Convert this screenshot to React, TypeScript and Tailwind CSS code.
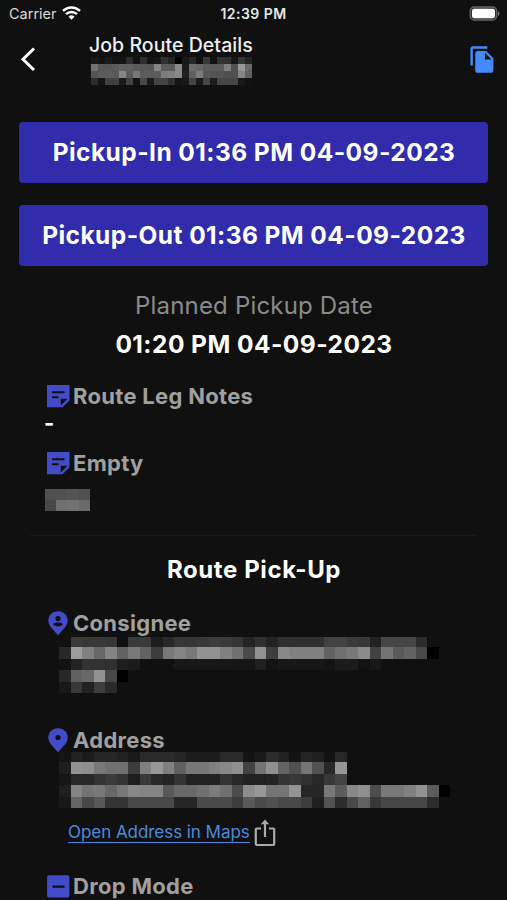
import type { ReactNode } from 'react';
import { MdFileCopy } from 'react-icons/md';

// Hidden values, one hex grey level per block. ".." leaves a block empty.
const JOB_NUMBER = [
  '1a 14 1a 12 14 2c 12 2e 14 18 30 22 04 18 26 10 38 12 34 30 16 36 24',
  '72 58 58 5c 60 60 5a 58 56 84 5c 5c 8a 1c 6c 66 5c 5c 5c 80 50 98 68',
  '54 5c 5c 58 86 5c 78 5c 5c 5c 7c 80 88 20 60 7c 58 54 54 50 50 84 60',
  '2c 14 42 42 1a 42 12 48 1a 44 44 30 14 18 44 1a 46 1c 46 46 46 18 12',
];

const CONSIGNEE = [
  '.. 3a 38 38 36 10 3a 3a 1e 28 35 35 38 3c 3a 35 24 30 24 30 30 30 30 42 42 3a 38 22 46 46 46 2c',
  '28 9c 80 68 84 62 78 62 3c 78 84 78 92 92 80 70 4a 90 3e 88 80 80 80 62 70 78 8a 42 74 5a 62 48 00',
  '12 22 32 32 30 1e 1c .. .. .. 17 18 18 18 18 16 16 20 13 17 17 17 17 13 1c 1c 12 18',
  '28 60 68 92 48 00',
  '18 38 22 3e 2a',
];

const ADDRESS = [
  '14 22 1c 26 26 22 1a 2a 2a 2a 26 1c 1c 1c 2a 2a 14 1a 2c 22 14 24 20 12 28',
  '1e 92 8e 78 70 70 3c 80 98 80 60 78 78 80 88 90 42 74 90 64 50 74 52 28 96',
  '16 28 28 34 3a 34 1e 3a 28 24 34 22 22 22 34 28 22 22 24 34 38 30 28 38 44',
  '1e 84 74 78 68 78 88 84 84 58 68 68 70 7c 70 4c 8c 98 74 74 94 26 26 78 5c 88 90 4c 78 78 80 92 5c 02',
  '18 64 48 58 34 34 48 48 48 48 26 26 4a 4a 4a 3c 5a 4a 50 48 48 3c 20 52 2c 48 62 38 46 46 46 46 2c',
];

function Mosaic({ rows, size, first, className }: { rows: string[]; size: number; first?: number; className: string }) {
  const trim = size - (first ?? size);
  return (
    <svg className={`block ${className}`} shapeRendering="crispEdges" aria-hidden="true">
      {rows.map((row, y) =>
        row.split(' ').map((g, x) =>
          g === '..' ? null : (
            <rect
              key={`${x}-${y}`}
              x={x * size}
              y={y === 0 ? 0 : y * size - trim}
              width={size}
              height={y === 0 ? size - trim : size}
              fill={`#${g}${g}${g}`}
            />
          ),
        ),
      )}
    </svg>
  );
}

function NoteIcon() {
  return (
    <svg width="23" height="23" viewBox="0 0 23 23" fill="#434bc9">
      <path fillRule="evenodd" d="M0 0H22.500V15.500L15.500 22.300H0zM5 6.200v2h12.500v-2zM5 11.200v2h6.500v-2zM13.700 20.500 20.500 13.700H13.700z" />
    </svg>
  );
}

function PinIcon({ person }: { person?: boolean }) {
  return (
    <svg className="ml-px" width="20" height="25" viewBox="0 0 20 25" fill="#434bc9">
      <path d="M10 .2C4.500.2.300 4.300.300 9.600c0 2.600 1.200 4.900 3 7.200L10 24.200l6.700-7.400c1.800-2.300 3-4.600 3-7.200C19.700 4.300 15.500.2 10 .2z" />
      {person ? (
        <g fill="#101010">
          <circle cx="10" cy="7.500" r="2.600" />
          <path d="M5 13.100c1.200-2.100 8.800-2.100 10 0-1.600 3.200-8.400 3.200-10 0z" />
        </g>
      ) : (
        <circle cx="10" cy="9.500" r="2.600" fill="#101010" />
      )}
    </svg>
  );
}

function DropIcon() {
  return (
    <svg width="23" height="23" viewBox="0 0 23 23" fill="#434bc9">
      <rect x=".1" y=".3" width="22.300" height="22.300" rx="1.800" />
      <path d="M5.500 10.500h12v2.300h-12z" fill="#101010" />
    </svg>
  );
}

function Label({ icon, children }: { icon: ReactNode; children: ReactNode }) {
  return (
    <div className="flex h-7 items-center pl-[47px]">
      <span className="flex w-[26px] shrink-0">{icon}</span>
      <span className="text-[22px] leading-7 font-[650] tracking-[0.3px] whitespace-nowrap text-[#a0a0a0]">{children}</span>
    </div>
  );
}

export default function App() {
  return (
    <main className="flex h-[900px] w-[507px] flex-col overflow-hidden bg-[#101010] font-['Inter',sans-serif] text-white">
      {/* Status bar */}
      <div className="grid h-7 shrink-0 grid-cols-3 items-center pr-[7px] pb-px pl-[9px] text-[14.5px]">
        <div className="flex items-center gap-1.5 text-[#d8d8d8]">
          <span>Carrier</span>
          <svg className="-ml-px -mt-px" width="19" height="14" viewBox="0 0 19 14" fill="none" stroke="#fff" strokeWidth="2.5">
            <path d="M1 4.900a12.200 12.200 0 0 1 17 0" />
            <path d="M4 8.200a8 8 0 0 1 11 0" />
            <path d="M9.500 13.800 6.500 10.800a4.300 4.300 0 0 1 6 0z" fill="#fff" stroke="none" />
          </svg>
        </div>
        <span className="-ml-0.5 text-center text-[14px] font-semibold tracking-[0.45px] whitespace-nowrap text-[#e8e8e8]">12:39 PM</span>
        <svg className="-mt-px justify-self-end" width="31" height="15" viewBox="0 0 31 15">
          <rect x="1.200" y="1" width="26.500" height="13" rx="4" fill="#303030" stroke="#666" strokeWidth="1.300" />
          <rect x="3" y="2.700" width="23" height="9.600" rx="2.300" fill="#fff" />
          <path d="M29 5.200c2 .7 2 4 0 4.600z" fill="#777" />
        </svg>
      </div>

      {/* App bar */}
      <header className="flex h-[68px] shrink-0 items-start border-b border-[#0d0d0d] pr-2.5">
        <svg className="mt-[19px] ml-[20px]" width="16" height="25" viewBox="0 0 16 25" fill="none" stroke="#fff" strokeWidth="3">
          <path d="M14 1.500 3 12.300 14 23" />
        </svg>
        <div className="ml-[53px] flex-1 pt-[5px]">
          <h1 className="text-[19.5px] leading-6 font-medium tracking-[0.05px] text-[#efefef]">Job Route Details</h1>
          <Mosaic rows={JOB_NUMBER} size={7} className="ml-[2px] h-7 w-[161px]" />
        </div>
        <MdFileCopy className="mt-[17px] size-[29px] text-[#448aff]" />
      </header>

      <div className="flex flex-col gap-[22px] px-[19px] pt-[26px]">
        <button className="h-[61px] rounded-[4px] bg-[#302cab] pl-px text-[24.5px] font-[650] tracking-[0.45px] whitespace-nowrap">
          Pickup-In 01:36 PM 04-09-2023
        </button>
        <button className="h-[61px] rounded-[4px] bg-[#302cab] pl-px text-[24.5px] font-[650] tracking-[0.43px] whitespace-nowrap">
          Pickup-Out 01:36 PM 04-09-2023
        </button>
      </div>

      <div className="mt-[24px] pl-px text-center">
        <p className="text-[24px] leading-8 tracking-[0.18px] text-[#8b8b8b]">Planned Pickup Date</p>
        <p className="mt-[6px] text-[24.5px] leading-8 font-[650] tracking-[0.45px]">01:20 PM 04-09-2023</p>
      </div>

      <div className="mt-[22px]">
        <Label icon={<NoteIcon />}>Route Leg Notes</Label>
        <p className="h-[39px] pl-[44px] text-[22px] leading-[27px] font-bold">-</p>
        <Label icon={<NoteIcon />}>Empty</Label>
        <Mosaic rows={['50 50 54 50', '48 70 72 6a']} size={11.2} className="mt-3 ml-[45px] h-[23px] w-[45px]" />
      </div>

      <hr className="mx-[30px] mt-[23px] border-[#1a1a1a]" />

      <h2 className="mt-[18px] pl-px text-center text-[24px] leading-8 font-[650] tracking-[0.6px]">Route Pick-Up</h2>

      <section className="mt-[23px]">
        <Label icon={<PinIcon person />}>Consignee</Label>
        <Mosaic rows={CONSIGNEE} size={11.5} first={10} className="ml-[58.5px] h-[56px] w-[392px]" />
      </section>

      <section className="mt-[33px]">
        <Label icon={<PinIcon />}>Address</Label>
        <Mosaic rows={ADDRESS} size={11.5} first={10} className="-mt-[2px] ml-[58.5px] h-[56px] w-[392px]" />
        <div className="mt-[11px] flex items-center gap-1 pl-[68px]">
          <a className="border-b border-[#4b8bdf] text-[17px] leading-[19px] tracking-[-0.05px] text-[#4b8bdf]">Open Address in Maps</a>
          <svg width="22" height="28" viewBox="0 0 22 28" fill="none" stroke="#aaa" strokeWidth="2.200">
            <path d="M7 9.500H2.800Q1.800 9.500 1.800 10.500V25q0 1 1 1h16.400q1 0 1-1V10.500q0-1-1-1H15M11 18V3" />
            <path d="m11 .6 4.200 4.600H6.800z" fill="#aaa" stroke="none" />
          </svg>
        </div>
      </section>

      <section className="mt-[25px]">
        <Label icon={<DropIcon />}>Drop Mode</Label>
      </section>
    </main>
  );
}
